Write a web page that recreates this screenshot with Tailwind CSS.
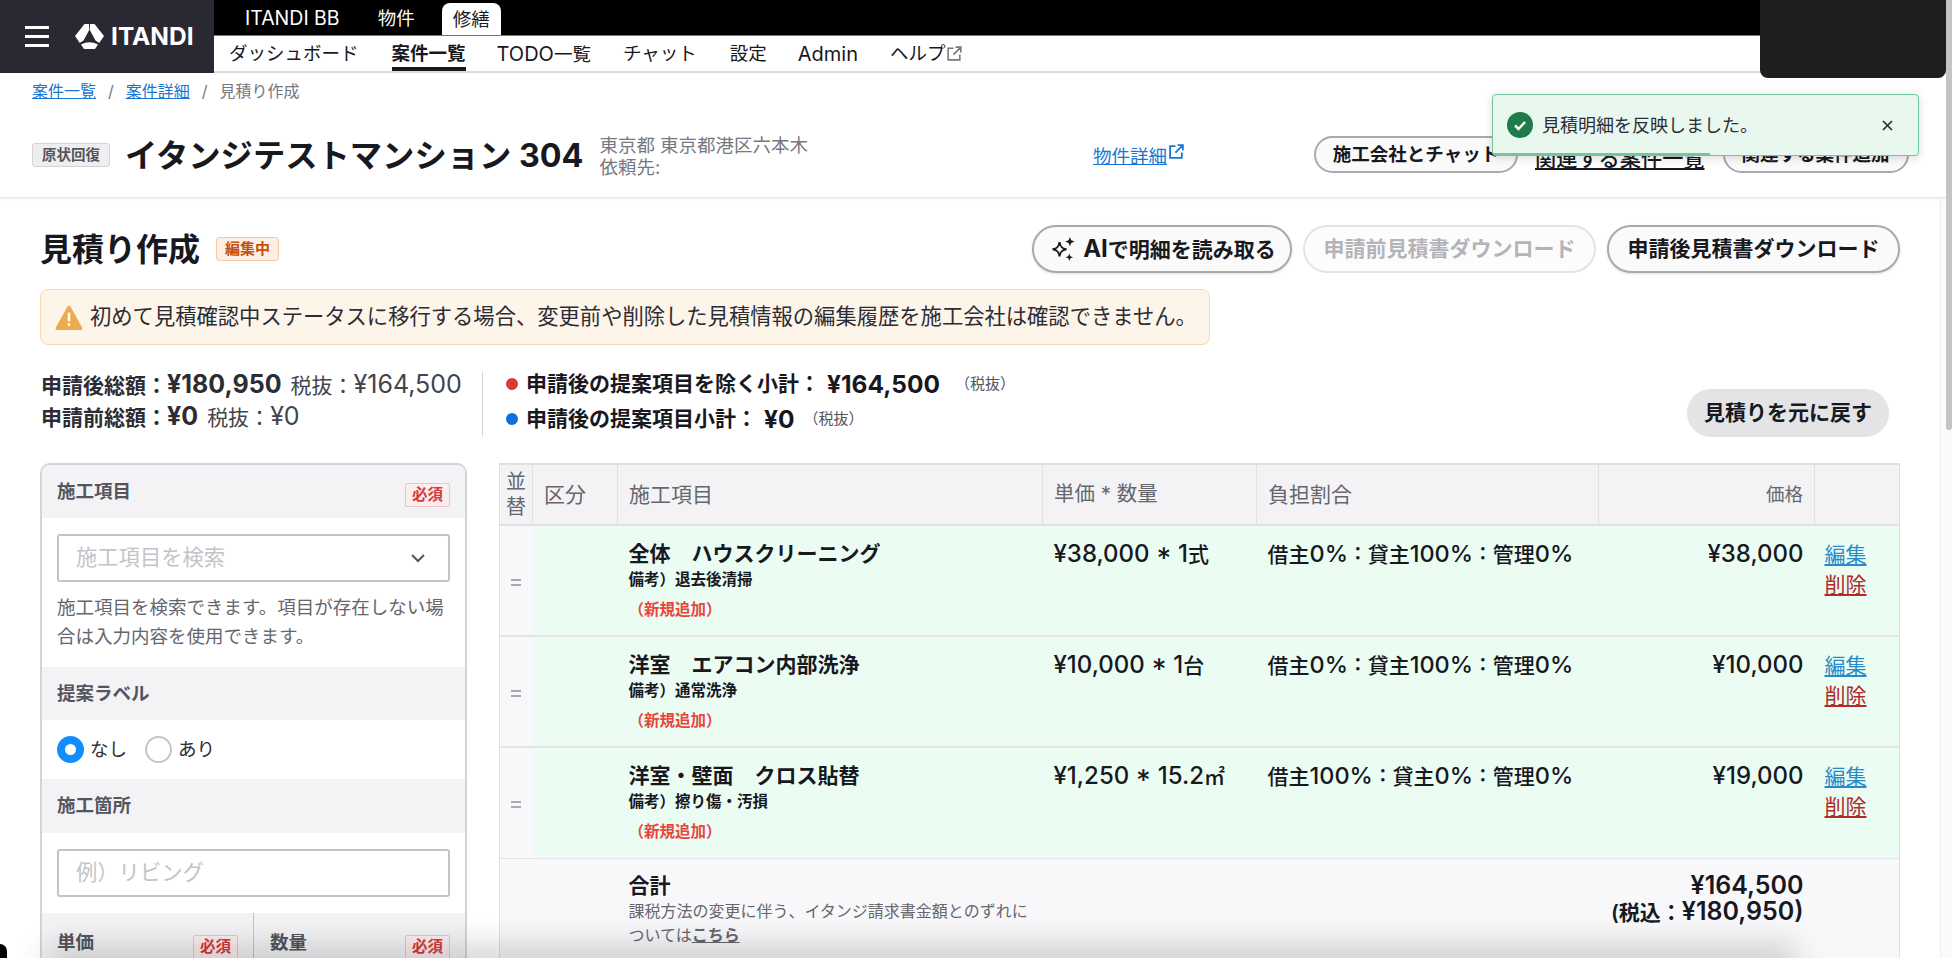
<!DOCTYPE html>
<html lang="ja">
<head>
  <meta charset="UTF-8" />
  <title>見積り作成</title>
  <script src="https://cdn.jsdelivr.net/npm/@tailwindcss/browser@4"></script>
</head>
<body class="bg-white text-[#18181f] overflow-hidden font-['Inter','Noto_Sans_CJK_JP',sans-serif]">
<div class="relative w-[1952px] h-[958px] overflow-hidden">

  <!-- Top nav -->
  <header class="flex h-[73px] border-b-2 border-[#dcdcde]">
    <div class="w-[214px] h-[73px] bg-[#2a2833] flex items-center pl-[25px] shrink-0">
      <div class="flex flex-col gap-[6px] w-[24px]">
        <span class="h-[3px] bg-white block"></span><span class="h-[3px] bg-white block"></span><span class="h-[3px] bg-white block"></span>
      </div>
      <svg class="ml-[26px]" width="29" height="25" viewBox="0 0 29 25"><path fill="#fff" d="M9.500 0H14L14.200 6 8.500 16.500 4.800 19 0 12zM19.500 0H15L14.800 6 20.500 16.500 24.200 19 29 12zM6 20.500Q14.500 16 23 20.500L20 25H9z"/></svg>
      <span class="ml-[7px] text-white text-[24.500px] font-bold leading-none">ITANDI</span>
    </div>
    <div class="flex-1">
      <div class="h-[36px] bg-black flex items-end pl-[31px] text-[18.500px] border-b border-[#77777a]">
        <span class="text-white text-[19.500px] h-[35px] leading-[37px]">ITANDI BB</span>
        <span class="text-white h-[35px] leading-[37px] ml-[38px]">物件</span>
        <span class="ml-[27px] h-[32px] w-[59px] bg-white rounded-t-[8px] text-center leading-[33px]">修繕</span>
      </div>
      <nav class="h-[35px] flex items-center text-[18.500px] pl-[15px] whitespace-nowrap">
        <span class="mr-[33px]">ダッシュボード</span>
        <span class="mr-[31px] font-bold h-[35px] leading-[35px] border-b-[4px] border-[#18181f]">案件一覧</span>
        <span class="mr-[32px]"><span class="text-[20px]">TODO</span>一覧</span>
        <span class="mr-[33px]">チャット</span>
        <span class="mr-[31px]">設定</span>
        <span class="mr-[32px] text-[20px]">Admin</span>
        <span class="flex items-center">ヘルプ
          <svg class="ml-[1px]" width="17" height="17" viewBox="0 0 16 16" fill="none" stroke="#77777f" stroke-width="1.500"><path d="M7 3H2v11h11V9M9 2h5v5M14 2L7 9"/></svg>
        </span>
      </nav>
    </div>
  </header>

  <!-- Property header -->
  <section class="h-[125px] border-b border-[#e8e8ea] shadow-[0_1px_3px_rgba(0,0,0,0.08)]">
    <div class="pt-[6px] pl-[32px] text-[16px] text-[#77777f] flex gap-[12px] leading-[24px]">
      <a class="text-[#1976d2] underline">案件一覧</a><span>/</span><a class="text-[#1976d2] underline">案件詳細</a><span>/</span><span>見積り作成</span>
    </div>
    <div class="flex items-center h-[48px] mt-[27px] pl-[32px] whitespace-nowrap">
      <div class="flex items-center w-[1061px]">
        <span class="w-[78px] h-[24px] mt-[2px] bg-[#eeeef0] border border-[#d4d4d8] rounded-[3px] text-[14.500px] font-bold text-[#55555d] text-center leading-[22px]">原状回復</span>
        <h2 class="ml-[15px] mt-[3px] text-[32.300px] font-bold leading-[48px]">イタンジテストマンション 304</h2>
        <div class="ml-[16px] mt-[4px] text-[18.500px] text-[#77777f] leading-[22px]">
          <p>東京都 東京都港区六本木</p>
          <p>依頼先:</p>
        </div>
      </div>
      <a class="w-[221px] mt-[6px] text-[18.500px] text-[#1976d2] flex items-start"><span class="underline">物件詳細</span>
        <svg class="ml-[1px]" width="17" height="17" viewBox="0 0 16 16" fill="none" stroke="#1976d2" stroke-width="1.700"><path d="M7 3H2v11h11V9M9 2h5v5M14 2L7 9"/></svg>
      </a>
      <span class="w-[204px] h-[37px] rounded-full border-2 border-[#a9a9ae] bg-[#fafafa] text-[18.500px] font-bold text-center leading-[33px]">施工会社とチャット</span>
      <a class="ml-[17px] text-[21.200px] underline mt-[9px] font-medium">関連する案件一覧</a>
      <span class="ml-[18px] w-[186px] h-[37px] rounded-full border-2 border-[#a9a9ae] bg-[#fafafa] text-[18.500px] font-bold text-center leading-[33px]">関連する案件追加</span>
    </div>
  </section>

  <!-- Estimate head -->
  <div class="flex items-center pl-[40px] pr-[52px] mt-[27px] h-[48px] whitespace-nowrap">
    <h1 class="text-[32px] font-bold leading-[46px] mt-[1px]">見積り作成</h1>
    <span class="ml-[16px] w-[63px] h-[24px] rounded-[3px] border border-[#f5c9a8] bg-[#fdeee3] text-[15px] font-bold text-[#c4500c] text-center leading-[22px]">編集中</span>
    <div class="ml-auto flex gap-[11px] text-[21px] font-bold">
      <button class="w-[260px] h-[48px] rounded-full border-2 border-[#a9a9ae] bg-[#fafafa] flex items-center justify-center gap-[5px] shadow-sm">
        <svg width="30" height="30" viewBox="0 0 26 26" fill="none" stroke="#18181f" stroke-width="1.700"><path d="M10 7c.6 4 2 5.600 6 6.200-4 .6-5.400 2.200-6 6.200-.6-4-2-5.600-6-6.200 4-.6 5.400-2.200 6-6.200z"/><path fill="#18181f" stroke="none" d="M19 2.500l1.100 3 3 1.100-3 1.100-1.100 3-1.100-3-3-1.100 3-1.100zM18.500 17l.9 2.300 2.300.9-2.300.9-.9 2.300-.9-2.300-2.300-.9 2.300-.9z"/></svg>
        <span><span class="text-[24px]">AI</span>で明細を読み取る</span>
      </button>
      <button class="w-[293px] h-[48px] rounded-full border-2 border-[#e4e4e6] bg-[#fcfcfc] text-[#b4b4b8]">申請前見積書ダウンロード</button>
      <button class="w-[293px] h-[48px] rounded-full border-2 border-[#a9a9ae] bg-[#fafafa] shadow-sm">申請後見積書ダウンロード</button>
    </div>
  </div>

  <!-- Warning -->
  <div class="ml-[40px] mt-[16px] w-[1170px] h-[56px] rounded-[8px] border border-[#f7d9b0] bg-[#fdf5ea] flex items-center pl-[13px] text-[21.300px] text-[#2c2c34] whitespace-nowrap">
    <svg width="30" height="27" viewBox="0 0 30 28" class="shrink-0"><path fill="#eeaa4e" d="M13.500 2.500a1.800 1.800 0 0 1 3 0l12.300 22a1.800 1.800 0 0 1-1.500 2.500H2.700a1.800 1.800 0 0 1-1.500-2.500z"/><rect x="13.700" y="9" width="2.600" height="9" fill="#fff"/><rect x="13.700" y="20" width="2.600" height="2.800" fill="#fff"/></svg>
    <span class="ml-[6px]">初めて見積確認中ステータスに移行する場合、変更前や削除した見積情報の編集履歴を施工会社は確認できません。</span>
  </div>

  <!-- Totals -->
  <div class="flex items-start pl-[41px] pr-[63px] mt-[24px] h-[94px] whitespace-nowrap">
    <div class="w-[441px] text-[#2c2c34] leading-[30px] text-[21px]">
      <p><b class="font-bold">申請後総額：<span class="text-[25px]">¥180,950</span></b><span class="text-[#44444c] ml-[9px]">税抜：<span class="text-[25px]">¥164,500</span></span></p>
      <p><b class="font-bold">申請前総額：<span class="text-[25px]">¥0</span></b><span class="text-[#44444c] ml-[9px]">税抜：<span class="text-[25px]">¥0</span></span></p>
    </div>
    <div class="border-l border-[#d4d4d8] h-[64px] mt-[3px] pl-[23px] text-[21px] font-bold">
      <p class="flex items-center h-[36px] -mt-[6px]"><span class="w-[12px] h-[12px] rounded-full bg-[#d63a3a] mr-[8px]"></span>申請後の提案項目を除く小計：<span class="ml-[7px] text-[24.500px]">¥164,500</span><span class="ml-[15px] text-[15px] font-normal text-[#55555d]">（税抜）</span></p>
      <p class="flex items-center h-[36px] -mt-[1px]"><span class="w-[12px] h-[12px] rounded-full bg-[#0f6fdc] mr-[8px]"></span>申請後の提案項目小計：<span class="ml-[7px] text-[24.500px]">¥0</span><span class="ml-[9px] text-[15px] font-normal text-[#55555d]">（税抜）</span></p>
    </div>
    <button class="ml-auto mt-[20px] w-[202px] h-[48px] rounded-full bg-[#e4e4e6] text-[21px] font-bold">見積りを元に戻す</button>
  </div>

  <!-- Main -->
  <div class="flex pl-[40px]">
    <!-- Form -->
    <aside class="w-[427px] h-[600px] border-2 border-[#d4d4d8] rounded-[10px] overflow-hidden shrink-0 text-[#55555d]">
      <div class="h-[53px] bg-[#f3f3f5] flex items-center justify-between px-[15px]">
        <b class="text-[18.500px]">施工項目</b>
        <span class="w-[45px] h-[24px] mt-[7px] border border-[#f3c2c2] bg-[#fdeeee] rounded-[2px] text-[15.500px] font-bold text-[#d63a3a] text-center leading-[22px]">必須</span>
      </div>
      <div class="px-[15px] pt-[16px] h-[149px]">
        <div class="h-[48px] border-2 border-[#c4c4c8] rounded-[3px] flex items-center justify-between pl-[17px] pr-[22px] text-[21.300px] text-[#c4c4c8]">
          施工項目を検索
          <svg width="16" height="10" viewBox="0 0 16 10" fill="none" stroke="#55555d" stroke-width="2"><path d="M2 2l6 6 6-6"/></svg>
        </div>
        <p class="mt-[11px] text-[18.500px] leading-[29px] text-[#66666e]">施工項目を検索できます。項目が存在しない場合は入力内容を使用できます。</p>
      </div>
      <div class="h-[53px] bg-[#f3f3f5] flex items-center pl-[15px]"><b class="text-[18.500px]">提案ラベル</b></div>
      <div class="h-[59px] flex items-center pl-[15px] text-[18.500px] text-[#2c2c34]">
        <span class="w-[27px] h-[27px] rounded-full border-[8px] border-[#0f8fff] bg-white"></span>
        <span class="ml-[6px]">なし</span>
        <span class="ml-[18px] w-[27px] h-[27px] rounded-full border-2 border-[#c4c4c8] bg-white"></span>
        <span class="ml-[6px]">あり</span>
      </div>
      <div class="h-[54px] bg-[#f3f3f5] flex items-center pl-[15px]"><b class="text-[18.500px]">施工箇所</b></div>
      <div class="px-[15px] pt-[16px] h-[80px]">
        <div class="h-[48px] border-2 border-[#c4c4c8] rounded-[3px] flex items-center pl-[17px] text-[21.300px] text-[#c4c4c8]">例）リビング</div>
      </div>
      <div class="flex h-[60px] bg-[#f3f3f5]">
        <div class="w-[212px] border-r border-[#c4c4c8] flex items-center justify-between px-[15px]">
          <b class="text-[18.500px]">単価</b>
          <span class="w-[45px] h-[24px] mt-[7px] border border-[#f3c2c2] bg-[#fdeeee] rounded-[2px] text-[15.500px] font-bold text-[#d63a3a] text-center leading-[22px]">必須</span>
        </div>
        <div class="flex-1 flex items-center justify-between pl-[16px] pr-[15px]">
          <b class="text-[18.500px]">数量</b>
          <span class="w-[45px] h-[24px] mt-[7px] border border-[#f3c2c2] bg-[#fdeeee] rounded-[2px] text-[15.500px] font-bold text-[#d63a3a] text-center leading-[22px]">必須</span>
        </div>
      </div>
    </aside>

    <!-- Table -->
    <table class="ml-[32px] w-[1400px] self-start border-collapse table-fixed text-[21px] border-x border-[#e0e0e3] whitespace-nowrap">
      <colgroup><col class="w-[33px]"/><col class="w-[85px]"/><col class="w-[425px]"/><col class="w-[214px]"/><col class="w-[342px]"/><col class="w-[216px]"/><col class="w-[85px]"/></colgroup>
      <thead>
        <tr class="h-[61px] bg-[#f3f3f5] text-[#66666e] border-y-2 border-[#e0e0e3]">
          <th class="font-normal text-[20px] leading-[25px] px-[6px] border-r border-[#e0e0e3] whitespace-normal">並替</th>
          <th class="font-normal text-left pl-[11px] border-r border-[#e0e0e3]">区分</th>
          <th class="font-normal text-left pl-[11px] border-r border-[#e0e0e3]">施工項目</th>
          <th class="font-normal text-left pl-[11px] border-r border-[#e0e0e3] text-[20.500px]">単価 * 数量</th>
          <th class="font-normal text-left pl-[11px] border-r border-[#e0e0e3]">負担割合</th>
          <th class="font-normal text-[18.500px] text-right pr-[11px] border-r border-[#e0e0e3]">価格</th>
          <th></th>
        </tr>
      </thead>
      <tbody>
        <tr class="h-[111px] border-b-2 border-[#e4e4e6]">
          <td class="bg-[#f8f8fa] text-center align-middle"><svg class="inline" width="10" height="9" viewBox="0 0 10 9"><path fill="#a9a9ae" d="M0 1h10v2H0zM0 6h10v2H0z"/></svg></td>
          <td class="bg-[#ebfdf3]"></td>
          <td class="bg-[#ebfdf3] align-top pl-[11px] pt-[14px]"><b class="block leading-[28px]">全体　ハウスクリーニング</b><b class="block text-[15.500px] leading-[24px]">備考）退去後清掃</b><b class="block text-[15.500px] text-[#e8453c] leading-[24px] mt-[6px]">（新規追加）</b></td>
          <td class="bg-[#ebfdf3] align-top pl-[11px] pt-[14px] font-medium leading-[28px]"><span class="text-[24px]">¥38,000 * 1</span>式</td>
          <td class="bg-[#ebfdf3] align-top pl-[11px] pt-[14px] font-medium leading-[28px]">借主<span class="text-[23.500px]">0% : </span>貸主<span class="text-[23.500px]">100% : </span>管理<span class="text-[23.500px]">0%</span></td>
          <td class="bg-[#ebfdf3] align-top text-right pr-[11px] pt-[14px] text-[24px] font-medium leading-[28px]">¥38,000</td>
          <td class="bg-[#ebfdf3] align-top pl-[10px] pt-[14px] leading-[30px]"><a class="block text-[#2a8ac9] underline">編集</a><a class="block text-[#b02a2a] underline">削除</a></td>
        </tr>
        <tr class="h-[111px] border-b-2 border-[#e4e4e6]">
          <td class="bg-[#f8f8fa] text-center align-middle"><svg class="inline" width="10" height="9" viewBox="0 0 10 9"><path fill="#a9a9ae" d="M0 1h10v2H0zM0 6h10v2H0z"/></svg></td>
          <td class="bg-[#ebfdf3]"></td>
          <td class="bg-[#ebfdf3] align-top pl-[11px] pt-[14px]"><b class="block leading-[28px]">洋室　エアコン内部洗浄</b><b class="block text-[15.500px] leading-[24px]">備考）通常洗浄</b><b class="block text-[15.500px] text-[#e8453c] leading-[24px] mt-[6px]">（新規追加）</b></td>
          <td class="bg-[#ebfdf3] align-top pl-[11px] pt-[14px] font-medium leading-[28px]"><span class="text-[24px]">¥10,000 * 1</span>台</td>
          <td class="bg-[#ebfdf3] align-top pl-[11px] pt-[14px] font-medium leading-[28px]">借主<span class="text-[23.500px]">0% : </span>貸主<span class="text-[23.500px]">100% : </span>管理<span class="text-[23.500px]">0%</span></td>
          <td class="bg-[#ebfdf3] align-top text-right pr-[11px] pt-[14px] text-[24px] font-medium leading-[28px]">¥10,000</td>
          <td class="bg-[#ebfdf3] align-top pl-[10px] pt-[14px] leading-[30px]"><a class="block text-[#2a8ac9] underline">編集</a><a class="block text-[#b02a2a] underline">削除</a></td>
        </tr>
        <tr class="h-[111px] border-b border-[#e4e4e6]">
          <td class="bg-[#f8f8fa] text-center align-middle"><svg class="inline" width="10" height="9" viewBox="0 0 10 9"><path fill="#a9a9ae" d="M0 1h10v2H0zM0 6h10v2H0z"/></svg></td>
          <td class="bg-[#ebfdf3]"></td>
          <td class="bg-[#ebfdf3] align-top pl-[11px] pt-[14px]"><b class="block leading-[28px]">洋室・壁面　クロス貼替</b><b class="block text-[15.500px] leading-[24px]">備考）擦り傷・汚損</b><b class="block text-[15.500px] text-[#e8453c] leading-[24px] mt-[6px]">（新規追加）</b></td>
          <td class="bg-[#ebfdf3] align-top pl-[11px] pt-[14px] font-medium leading-[28px]"><span class="text-[24px]">¥1,250 * 15.2</span>㎡</td>
          <td class="bg-[#ebfdf3] align-top pl-[11px] pt-[14px] font-medium leading-[28px]">借主<span class="text-[23.500px]">100% : </span>貸主<span class="text-[23.500px]">0% : </span>管理<span class="text-[23.500px]">0%</span></td>
          <td class="bg-[#ebfdf3] align-top text-right pr-[11px] pt-[14px] text-[24px] font-medium leading-[28px]">¥19,000</td>
          <td class="bg-[#ebfdf3] align-top pl-[10px] pt-[14px] leading-[30px]"><a class="block text-[#2a8ac9] underline">編集</a><a class="block text-[#b02a2a] underline">削除</a></td>
        </tr>
        <tr class="h-[120px] bg-[#f8f8fb]">
          <td></td><td></td>
          <td colspan="3" class="align-top pl-[11px] pt-[14px]"><b class="block leading-[26px]">合計</b><p class="text-[16px] text-[#66666e] w-[410px] leading-[24px] whitespace-normal">課税方法の変更に伴う、イタンジ請求書金額とのずれについては<u class="font-bold">こちら</u></p></td>
          <td class="align-top text-right pr-[11px] pt-[14px] font-semibold leading-[25px]"><span class="text-[25px]">¥164,500</span><br/>(税込：<span class="text-[25px]">¥180,950)</span></td>
          <td></td>
        </tr>
      </tbody>
    </table>
  </div>

  <!-- Page scrollbar -->
  <div class="absolute right-0 top-[199px] w-[12px] h-[759px] bg-[#fafafa] border-l border-[#eeeeee]"></div>
  <div class="absolute right-0 top-0 w-[6px] h-[430px] rounded-b-full bg-[#c4c4c6]"></div>

  <!-- Window shadow along the bottom edge -->
  <div class="absolute left-[60px] right-[170px] -bottom-[12px] h-[12px] shadow-[0_0_30px_14px_rgba(0,0,0,0.16)]"></div>
  <div class="absolute left-0 bottom-0 w-[7px] h-[14px] bg-black rounded-tr-full"></div>

  <!-- Toast -->
  <div class="absolute left-[1492px] top-[94px] w-[427px] h-[62px] rounded-[4px] border border-[#6fc79a] bg-[#e8f8ef] flex items-center pl-[14px] text-[18px] text-[#2c2c34] shadow-[0_2px_10px_rgba(0,0,0,0.15)] overflow-hidden">
    <svg width="26" height="26" viewBox="0 0 26 26" class="shrink-0"><circle cx="13" cy="13" r="13" fill="#1f7a4c"/><path d="M8 13.500l3.500 3.500 6.500-7" fill="none" stroke="#fff" stroke-width="2.500"/></svg>
    <span class="ml-[9px]">見積明細を反映しました。</span>
    <svg class="ml-auto mr-[25px]" width="11" height="11" viewBox="0 0 11 11" fill="none" stroke="#2c2c34" stroke-width="1.700"><path d="M1 1l9 9M10 1l-9 9"/></svg>
    <span class="absolute left-0 bottom-0 w-[217px] h-[2px] bg-[#6fc79a]"></span>
  </div>

  <!-- Dark overlay top right -->
  <div class="absolute left-[1760px] top-0 w-[186px] h-[78px] bg-[#1e1e1e] rounded-b-[8px]"></div>
</div>
</body>
</html>
